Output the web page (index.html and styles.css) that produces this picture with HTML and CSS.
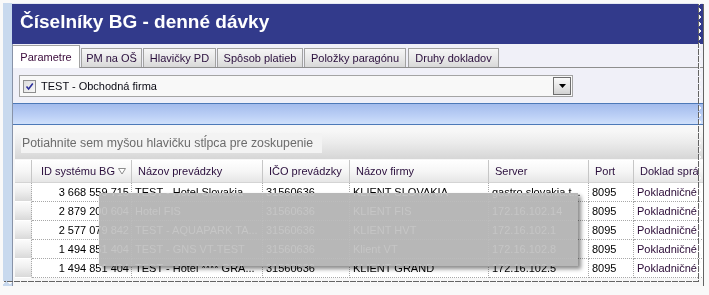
FILE: index.html
```html
<!DOCTYPE html>
<html lang="sk">
<head>
  <meta charset="UTF-8" />
  <title>Číselníky BG - denné dávky</title>
  <link rel="stylesheet" href="styles.css">
</head>
<body>
  <div class="shot">
    <div class="window">
      <div class="edge"></div>
      <div class="main">
        <div class="titlebar">Číselníky BG - denné dávky</div>
        <div class="content">
          <div class="tabs">
            <div class="tab active">Parametre</div>
            <div class="tab t-pm">PM na OŠ</div>
            <div class="tab t-hl">Hlavičky PD</div>
            <div class="tab t-sp">Spôsob platieb</div>
            <div class="tab t-po">Položky paragónu</div>
            <div class="tab t-dr">Druhy dokladov</div>
          </div>

          <div class="panel">
            <div class="combo">
              <span class="check">
                <svg width="11" height="11" viewBox="0 0 11 11"><path d="M2.5 5.5 L4.6 8 L8.8 2.6" fill="none" stroke="#2b2f9a" stroke-width="1.6"/></svg>
              </span>
              <span class="combo-text">TEST - Obchodná firma</span>
              <span class="combo-btn">
                <svg width="7" height="4" viewBox="0 0 7 4"><polygon points="0,0 7,0 3.5,4" fill="#000"/></svg>
              </span>
            </div>
          </div>

          <div class="band"></div>

          <div class="grid-area">
            <div class="group-panel">
              <span class="group-hint">Potiahnite sem myšou hlavičku stĺpca pre zoskupenie</span>
            </div>

            <div class="grid">
              <div class="row head">
                <div class="hcell"></div>
                <div class="hcell num">ID systému BG
                  <svg class="filter" width="8" height="8" viewBox="0 0 8 8"><polygon points="0.5,1.5 7.5,1.5 4,7" fill="#fff" stroke="#8c8c8c"/></svg>
                </div>
                <div class="hcell">Názov prevádzky</div>
                <div class="hcell">IČO prevádzky</div>
                <div class="hcell">Názov firmy</div>
                <div class="hcell">Server</div>
                <div class="hcell">Port</div>
                <div class="hcell">Doklad sprá</div>
              </div>

              <div class="row">
                <div class="cell sel"></div>
                <div class="cell num">3 668 559 715</div>
                <div class="cell">TEST - Hotel Slovakia</div>
                <div class="cell">31560636</div>
                <div class="cell">KLIENT SLOVAKIA</div>
                <div class="cell">gastro.slovakia.t...</div>
                <div class="cell">8095</div>
                <div class="cell doc">Pokladničné</div>
              </div>
              <div class="row">
                <div class="cell sel"></div>
                <div class="cell num">2 879 200 604</div>
                <div class="cell">Hotel FIS</div>
                <div class="cell">31560636</div>
                <div class="cell">KLIENT FIS</div>
                <div class="cell">172.16.102.14</div>
                <div class="cell">8095</div>
                <div class="cell doc">Pokladničné</div>
              </div>
              <div class="row">
                <div class="cell sel"></div>
                <div class="cell num">2 577 079 842</div>
                <div class="cell">TEST - AQUAPARK TA...</div>
                <div class="cell">31560636</div>
                <div class="cell">KLIENT HVT</div>
                <div class="cell">172.16.102.1</div>
                <div class="cell">8095</div>
                <div class="cell doc">Pokladničné</div>
              </div>
              <div class="row">
                <div class="cell sel"></div>
                <div class="cell num">1 494 851 404</div>
                <div class="cell">TEST - GNS VT-TEST</div>
                <div class="cell">31560636</div>
                <div class="cell">Klient VT</div>
                <div class="cell">172.16.102.8</div>
                <div class="cell">8095</div>
                <div class="cell doc">Pokladničné</div>
              </div>
              <div class="row">
                <div class="cell sel"></div>
                <div class="cell num">1 494 851 404</div>
                <div class="cell">TEST - Hotel **** GRA...</div>
                <div class="cell">31560636</div>
                <div class="cell">KLIENT GRAND</div>
                <div class="cell">172.16.102.5</div>
                <div class="cell">8095</div>
                <div class="cell doc">Pokladničné</div>
              </div>

              <div class="overlay"></div>
            </div>
          </div>
        </div>
      </div>
    </div>
  </div>
</body>
</html>
```

FILE: styles.css
```css
body {
  margin: 0;
  background-color: #f9f9f9;
  font-family: "Liberation Sans", Arial, sans-serif;
  font-size: 11px;
  color: #000;
}

.shot {
  padding: 3px 0 0 3px;
  filter: drop-shadow(1px 1px 0.6px rgba(0, 0, 0, 0.6));
}

/* torn right and bottom edge */
.window {
  width: 700px;
  height: 283px;
  display: flex;
  background: #c8d9ee;
  -webkit-mask:
    linear-gradient(#000 0 0) 0 0 / calc(100% - 5px) calc(100% - 5px) no-repeat,
    conic-gradient(from 45deg at left, #000 90deg, #0000 0) 100% 0 / 5px 7px repeat-y,
    conic-gradient(from 135deg at top, #000 90deg, #0000 0) 0 100% / 7px 5px repeat-x;
  mask:
    linear-gradient(#000 0 0) 0 0 / calc(100% - 5px) calc(100% - 5px) no-repeat,
    conic-gradient(from 45deg at left, #000 90deg, #0000 0) 100% 0 / 5px 7px repeat-y,
    conic-gradient(from 135deg at top, #000 90deg, #0000 0) 0 100% / 7px 5px repeat-x;
}

.edge {
  width: 9px;
  flex: none;
  background: #c8d9ee;
}

.main {
  flex: 1;
  display: flex;
  flex-direction: column;
  border-top: 1px solid #e4e8f2;
  min-width: 0;
}

.titlebar {
  height: 40px;
  line-height: 36px;
  padding-left: 8px;
  background: #323a8b;
  color: #fff;
  font-size: 19px;
  font-weight: bold;
  flex: none;
}

.content {
  flex: 1;
  border-left: 1px solid #8893a8;
  background: #f0f0f8;
  display: flex;
  flex-direction: column;
  min-width: 0;
}

/* tabs */
.tabs {
  height: 23px;
  display: flex;
  align-items: flex-end;
  gap: 1px;
  border-bottom: 1px solid #8e8e8e;
  flex: none;
}

.tab {
  height: 19px;
  display: flex;
  align-items: center;
  justify-content: center;
  box-sizing: border-box;
  border: 1px solid #a2a2a2;
  border-bottom: none;
  background: linear-gradient(#f6f6f6, #e6e6e6 60%, #d8d8d8);
  color: #2a0e3c;
  white-space: nowrap;
}

.tab.active {
  height: 23px;
  margin-bottom: -1px;
  border-left: none;
  background: #fff;
  width: 67px;
  color: #3a0a3a;
}

.t-pm { width: 61px; }
.t-hl { width: 73px; }
.t-sp { width: 86px; }
.t-po { width: 102px; }
.t-dr { width: 91px; margin-left: 1px; }

/* filter combo */
.panel {
  padding: 7px 0 6px 6px;
  flex: none;
}

.combo {
  width: 554px;
  height: 22px;
  box-sizing: border-box;
  border: 1px solid #a4a4a4;
  background: #f8f8f8;
  display: flex;
  align-items: center;
  padding-left: 3px;
}

.check {
  width: 13px;
  height: 13px;
  box-sizing: border-box;
  border: 1px solid #8e8e8e;
  background: linear-gradient(135deg, #dcdcdc, #f8f8f8);
  display: flex;
  align-items: center;
  justify-content: center;
}

.combo-text {
  margin-left: 5px;
  flex: 1;
  color: #0a0a14;
}

.combo-btn {
  width: 18px;
  height: 18px;
  box-sizing: border-box;
  margin-right: 1px;
  border: 1px solid #6e6e6e;
  background: linear-gradient(#fafafa, #e4e4e4 60%, #d2d2d2);
  display: flex;
  align-items: center;
  justify-content: center;
}

.band {
  height: 22px;
  box-sizing: border-box;
  border-top: 1px solid #4d79b8;
  border-bottom: 1px solid #4d79b8;
  background: linear-gradient(#a3bbec, #bcd0f6 60%, #cfe0fb);
  flex: none;
}

/* grid */
.grid-area {
  flex: 1;
  background: #f7f7f7;
  padding: 6px 0 0 2px;
  min-width: 0;
  overflow: hidden;
}

.group-panel {
  height: 28px;
  box-sizing: border-box;
  padding: 2px 0 0 6px;
  margin-bottom: 1px;
  background: linear-gradient(#f7f7f7, #ececec 40%, #d6d6d6);
}

.group-hint {
  display: inline-block;
  width: 301px;
  height: 20px;
  line-height: 21px;
  padding-left: 1px;
  box-sizing: border-box;
  background: #f3f3f3;
  color: #6c6c6c;
  font-size: 12.3px;
  white-space: nowrap;
}

.grid {
  position: relative;
  background: #fff;
}

.row {
  display: grid;
  grid-template-columns: 17px 100px 131px 87px 139px 100px 45px 120px;
  height: 19px;
}

.row.head {
  height: 23px;
}

.hcell {
  display: flex;
  align-items: center;
  padding: 0 6px;
  box-sizing: border-box;
  border-right: 1px solid #c6c6c6;
  border-bottom: 1px solid #d4d4d4;
  background: linear-gradient(#ffffff, #f6f6f6 50%, #e6e6e6);
  color: #2a0e3c;
  white-space: nowrap;
  overflow: hidden;
}

.hcell.num {
  justify-content: flex-end;
  padding-right: 5px;
}

.filter {
  margin-left: 3px;
}

.cell {
  display: flex;
  align-items: center;
  padding: 0 3px;
  box-sizing: border-box;
  border-right: 1px dotted #a8a8a8;
  border-bottom: 1px dotted #a8a8a8;
  white-space: nowrap;
  overflow: hidden;
}

.cell.num {
  justify-content: flex-end;
  padding-right: 2px;
}

.cell.sel {
  background: linear-gradient(#fbfbfb, #efefef 45%, #d9d9d9);
  border-bottom-style: solid;
  border-bottom-color: #fff;
}

.cell.doc {
  color: #2a0a36;
}

.overlay {
  position: absolute;
  left: 84px;
  top: 33px;
  width: 479px;
  height: 73px;
  background: rgba(185, 185, 185, 0.1);
  -webkit-backdrop-filter: invert(1) contrast(0.045) brightness(1.5);
  backdrop-filter: invert(1) contrast(0.045) brightness(1.5);
  box-shadow: 3px 3px 4px rgba(0, 0, 0, 0.45);
}
```
